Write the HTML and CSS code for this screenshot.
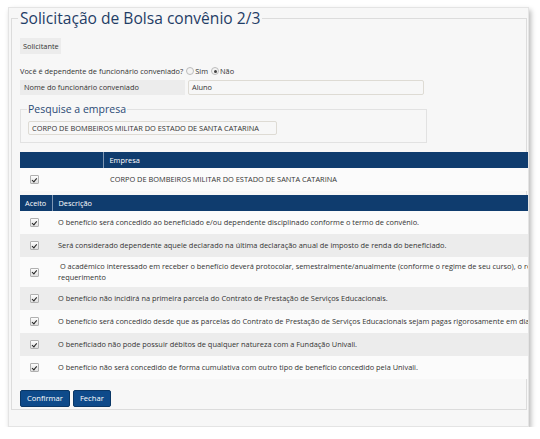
FILE: index.html
```html
<!DOCTYPE html>
<html lang="pt-BR">
<head>
<meta charset="utf-8">
<title>Solicitação de Bolsa convênio 2/3</title>
<link rel="stylesheet" href="styles.css">
</head>
<body>
<div class="window">
  <fieldset class="main">
    <legend class="title">Solicitação de Bolsa convênio 2/3</legend>
    <div class="section"><span class="tag">Solicitante</span></div>
    <div class="question">Você é dependente de funcionário conveniado?
      <label class="radio"><span class="dot"></span>Sim</label><label class="radio"><span class="dot on"></span>Não</label>
    </div>
    <div class="field">
      <span class="label">Nome do funcionário conveniado</span>
      <span class="input wide">Aluno</span>
    </div>
    <fieldset class="search">
      <legend>Pesquise a empresa</legend>
      <span class="input company">CORPO DE BOMBEIROS MILITAR DO ESTADO DE SANTA CATARINA</span>
    </fieldset>

    <table class="grid t1">
      <thead><tr><th class="c1"></th><th class="c2">Empresa</th></tr></thead>
      <tbody>
        <tr><td class="c1"><span class="chk"></span></td><td class="c2">CORPO DE BOMBEIROS MILITAR DO ESTADO DE SANTA CATARINA</td></tr>
      </tbody>
    </table>

    <table class="grid t2">
      <thead><tr><th class="c1">Aceito</th><th class="c2">Descrição</th></tr></thead>
      <tbody>
        <tr><td class="c1"><span class="chk"></span></td><td class="c2">O benefício será concedido ao beneficiado e/ou dependente disciplinado conforme o termo de convênio.</td></tr>
        <tr><td class="c1"><span class="chk"></span></td><td class="c2">Será considerado dependente aquele declarado na última declaração anual de imposto de renda do beneficiado.</td></tr>
        <tr><td class="c1"><span class="chk"></span></td><td class="c2">&nbsp;O acadêmico interessado em receber o benefício deverá protocolar, semestralmente/anualmente (conforme o regime de seu curso), o respectivo<br>requerimento</td></tr>
        <tr><td class="c1"><span class="chk"></span></td><td class="c2">O benefício não incidirá na primeira parcela do Contrato de Prestação de Serviços Educacionais.</td></tr>
        <tr><td class="c1"><span class="chk"></span></td><td class="c2">O benefício será concedido desde que as parcelas do Contrato de Prestação de Serviços Educacionais sejam pagas rigorosamente em dia.</td></tr>
        <tr><td class="c1"><span class="chk"></span></td><td class="c2">O beneficiado não pode possuir débitos de qualquer natureza com a Fundação Univali.</td></tr>
        <tr><td class="c1"><span class="chk"></span></td><td class="c2">O benefício não será concedido de forma cumulativa com outro tipo de benefício concedido pela Univali.</td></tr>
      </tbody>
    </table>

    <div class="actions">
      <button class="btn">Confirmar</button><button class="btn">Fechar</button>
    </div>
  </fieldset>
</div>
</body>
</html>
```

FILE: styles.css
```css
html, body {
  margin: 0;
  padding: 0;
  background: #ffffff;
}
body {
  padding: 7px 0 0 8px;
  font-family: "Open Sans", "DejaVu Sans", sans-serif;
  color: #333333;
  font-size: 7.4px;
}
.window {
  width: 519px;
  height: 418px;
  background: #f7f7f7;
  border: 1px solid #e4e4e4;
  box-shadow: 2px 3px 5px rgba(0, 0, 0, 0.28);
  overflow: hidden;
}
.main {
  margin: 0 1px 0 2px;
  padding: 10px 8px 0 8px;
  border: 1px solid #dcdcdc;
  min-width: 0;
  height: 402px;
  box-sizing: border-box;
}
.title {
  padding: 0 2px;
  margin-left: -2px;
  font-size: 15.6px;
  line-height: 20px;
  color: #1f3d66;
}
.section { display: flex; }
.tag {
  display: block;
  background: #ececec;
  line-height: 16px;
  height: 16px;
  padding: 0 2px 0 3px;
}
.question {
  margin-top: 11px;
  line-height: 12px;
  display: flex;
  align-items: center;
}
.radio {
  display: inline-flex;
  align-items: center;
  margin-left: 3px;
}
.dot {
  width: 6px;
  height: 6px;
  border: 1px solid #bcbcbc;
  border-radius: 50%;
  background: #f4f4f4;
  margin-right: 1px;
  position: relative;
}
.dot.on::after {
  content: "";
  position: absolute;
  left: 1.5px;
  top: 1.5px;
  width: 3px;
  height: 3px;
  border-radius: 50%;
  background: #444;
}
.field {
  margin-top: 3px;
  display: flex;
  gap: 3px;
  height: 15px;
}
.label {
  width: 165px;
  background: #ececec;
  line-height: 15px;
  padding-left: 4px;
  box-sizing: border-box;
}
.input {
  display: block;
  border: 1px solid #dedbd4;
  border-radius: 2px;
  background: #f7f7f7;
  box-sizing: border-box;
  padding-left: 3px;
}
.input.wide {
  width: 236px;
  line-height: 13px;
}
.search {
  margin: 8px 0 0 0;
  width: 407px;
  box-sizing: border-box;
  border: 1px solid #e2e2e2;
  padding: 6px 7px 7px 7px;
  min-width: 0;
}
.search legend {
  padding: 0 1px;
  margin-left: -1px;
  font-size: 10.5px;
  line-height: 12px;
  color: #2b4a75;
}
.input.company {
  width: 249px;
  height: 14px;
  line-height: 12px;
  padding-left: 3px;
}
.grid {
  border-collapse: collapse;
  width: 640px;
  white-space: nowrap;
}
.grid th {
  background: #0f3c6e;
  color: #ffffff;
  font-weight: normal;
  text-align: left;
  height: 16px;
  padding: 0 5px;
  line-height: 14px;
}
.grid th.c2 { border-left: 1px solid #7f97b3; padding-left: 6px; }
.grid td {
  padding: 4px 6px;
  line-height: 11px;
  vertical-align: middle;
}
.grid td.c1 { padding-left: 10px; }
.grid tbody tr:nth-child(odd) td { background: #fbfbfb; }
.grid tbody tr:nth-child(even) td { background: #ececec; }
.t1 { margin-top: 9px; }
.t1 .c1 { width: 83px; box-sizing: border-box; }
.t1 td.c2 { padding-left: 7px; }
.t1 td { height: 22px; box-sizing: border-box; }
.t2 { margin-top: 4px; }
.t2 .c1 { width: 32px; box-sizing: border-box; }
.chk {
  display: block;
  width: 7px;
  height: 7px;
  margin: 3px 0;
  border: 1px solid #b0b0b0;
  border-radius: 1px;
  background: linear-gradient(#fdfdfd, #e0e0e0);
  position: relative;
}
.chk::after {
  content: "";
  position: absolute;
  left: 2px;
  top: 0.5px;
  width: 1.6px;
  height: 3.8px;
  border: solid #222;
  border-width: 0 1.4px 1.4px 0;
  transform: rotate(40deg);
}
.actions {
  margin-top: 11px;
  display: flex;
  gap: 3px;
}
.btn {
  font-family: "Open Sans", "DejaVu Sans", sans-serif;
  font-size: 7.6px;
  color: #ffffff;
  background: #0e4a8a;
  border: 1px solid #0a3766;
  border-radius: 2px;
  height: 17px;
  padding: 0 6px;
  line-height: 15px;
}
```
